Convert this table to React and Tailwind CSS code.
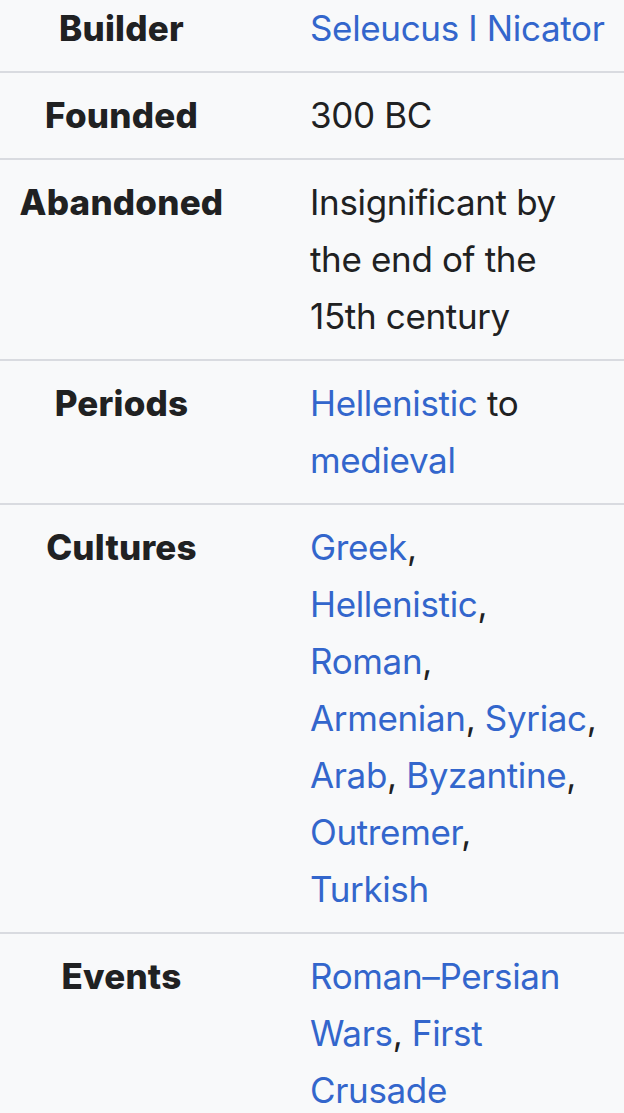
const ROWS = [
  { label: "Builder", lines: [[{ t: "Seleucus I Nicator", link: true }]] },
  { label: "Founded", lines: [[{ t: "300 BC" }]] },
  {
    label: "Abandoned",
    lines: [
      [{ t: "Insignificant by" }],
      [{ t: "the end of the" }],
      [{ t: "15th century" }],
    ],
  },
  {
    label: "Periods",
    lines: [
      [{ t: "Hellenistic", link: true }, { t: " to" }],
      [{ t: "medieval", link: true }],
    ],
  },
  {
    label: "Cultures",
    lines: [
      [{ t: "Greek", link: true }, { t: "," }],
      [{ t: "Hellenistic", link: true }, { t: "," }],
      [{ t: "Roman", link: true }, { t: "," }],
      [{ t: "Armenian", link: true }, { t: ", " }, { t: "Syriac", link: true }, { t: "," }],
      [{ t: "Arab", link: true }, { t: ", " }, { t: "Byzantine", link: true }, { t: "," }],
      [{ t: "Outremer", link: true }, { t: "," }],
      [{ t: "Turkish", link: true }],
    ],
  },
  {
    label: "Events",
    lines: [
      [{ t: "Roman–Persian", link: true }],
      [{ t: "Wars", link: true }, { t: ", " }, { t: "First", link: true }],
      [{ t: "Crusade", link: true }],
    ],
  },
];

function Row({ row }) {
  return (
    <div className="grid grid-cols-[243px_1fr] border-b-2 border-[#d9dbe0] py-[14px] last:border-b-0">
      <div className="text-center font-extrabold tracking-[0.2px] text-[#202122]">
        {row.label}
      </div>
      <div className="pl-[67px] tracking-[-0.35px] text-[#202122]">
        {row.lines.map((line, i) => (
          <div key={i} className="whitespace-nowrap">
            {line.map((seg, j) =>
              seg.link ? (
                <a key={j} className="text-[#3366cc]">
                  {seg.t}
                </a>
              ) : (
                <span key={j}>{seg.t}</span>
              ),
            )}
          </div>
        ))}
      </div>
    </div>
  );
}

export default function App() {
  return (
    <div className="h-[1113px] overflow-hidden bg-[#f8f9fa] font-['Inter','Noto_Sans',sans-serif] text-[35px] leading-[57px]">
      <div className="-mt-[14px]">
        {ROWS.map((row) => (
          <Row key={row.label} row={row} />
        ))}
      </div>
    </div>
  );
}
